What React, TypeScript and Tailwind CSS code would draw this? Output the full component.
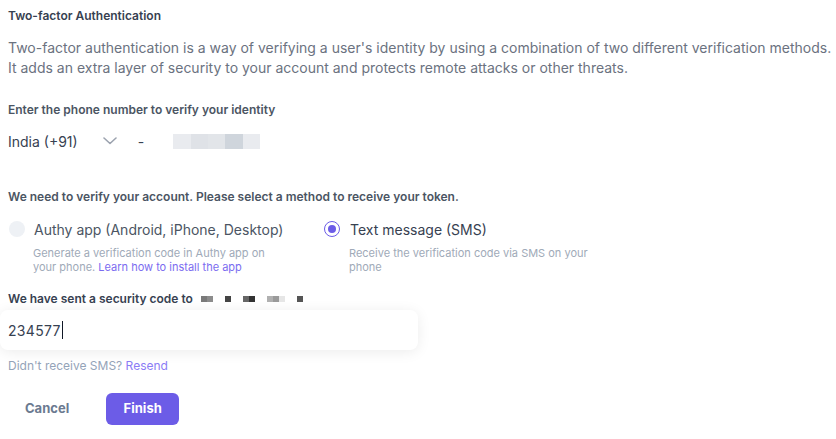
import React from "react";

const phoneBlocks = ["#e9ebef", "#dfe2e7", "#e2e5e9", "#cfd5dc", "#e9ebef"];
const codeBlocks: { c: string }[] = [
  { c: "#7a7a7a" },
  { c: "#8c8c8c" },
  { c: "#ffffff" },
  { c: "#ffffff" },
  { c: "#444444" },
  { c: "#ffffff" },
  { c: "#ffffff" },
  { c: "#666666" },
  { c: "#333333" },
  { c: "#ffffff" },
  { c: "#ffffff" },
  { c: "#b0b0b0" },
  { c: "#9a9a9a" },
  { c: "#e6e6e6" },
  { c: "#ffffff" },
  { c: "#ffffff" },
  { c: "#555555" },
];

export default function App() {
  return (
    <div
      className="w-[836px] h-[439px] bg-white overflow-hidden px-2 pt-[8px]"
      style={{ fontFamily: "Inter, 'Noto Sans', sans-serif" }}
    >
      <div className="text-[12px] leading-[16px] font-semibold text-[#374151]">
        Two-factor Authentication
      </div>
      <p className="mt-[14px] text-[14px] leading-[20px] text-[#6b7280] w-[830px]">
        Two-factor authentication is a way of verifying a user's identity by using a combination of two different verification methods. It adds an extra layer of security to your account and protects remote attacks or other threats.
      </p>

      <div className="mt-[24px] text-[12px] leading-[16px] font-semibold text-[#4b5563]">
        Enter the phone number to verify your identity
      </div>
      <div className="mt-[13px] flex items-center h-[20px]">
        <span className="text-[14px] text-[#374151]">India (+91)</span>
        <svg className="ml-[25px]" width="14" height="8" viewBox="0 0 14 8" fill="none">
          <path d="M1 1l6 5.5L13 1" stroke="#9ca3af" strokeWidth="1.6" strokeLinecap="round" strokeLinejoin="round" />
        </svg>
        <span className="ml-[21px] text-[14px] text-[#374151]">-</span>
        <div className="ml-[29px] flex h-[15px]">
          {phoneBlocks.map((c, i) => (
            <div key={i} className="w-[17.4px] h-full" style={{ background: c }} />
          ))}
        </div>
      </div>

      <div className="mt-[38px] text-[12px] leading-[16px] font-semibold text-[#4b5563]">
        We need to verify your account. Please select a method to receive your token.
      </div>

      <div className="mt-[14px] flex">
        <div className="w-[316px]">
          <div className="flex items-center h-[20px]">
            <span className="w-[16px] h-[16px] rounded-full bg-[#eef1f5] ml-[1px]" />
            <span className="ml-[9px] text-[14px] text-[#4b5563]">Authy app (Android, iPhone, Desktop)</span>
          </div>
          <div className="mt-[7px] ml-[25px] w-[250px] text-[11px] leading-[14px] text-[#a0aab8]">
            <div>Generate a verification code in Authy app on</div>
            <div>
              your phone. <span className="text-[#7b6cf0]">Learn how to install the app</span>
            </div>
          </div>
        </div>
        <div>
          <div className="flex items-center h-[20px]">
            <span className="w-[16px] h-[16px] rounded-full border-[1.5px] border-[#6c5ce7] flex items-center justify-center">
              <span className="w-[8px] h-[8px] rounded-full bg-[#6c5ce7]" />
            </span>
            <span className="ml-[10px] text-[14px] text-[#374151]">Text message (SMS)</span>
          </div>
          <div className="mt-[7px] ml-[25px] text-[11px] leading-[14px] text-[#a0aab8] w-[250px]">
            Receive the verification code via SMS on your phone
          </div>
        </div>
      </div>

      <div className="mt-[17px] flex items-center text-[12px] leading-[16px] font-semibold text-[#374151]">
        <span>We have sent a security code to</span>
        <div className="ml-[8px] flex h-[6px]">
          {codeBlocks.map((b, i) => (
            <div key={i} className="w-[6px] h-full" style={{ background: b.c }} />
          ))}
        </div>
      </div>

      <div className="-ml-2 mt-[3px] w-[418px] h-[40px] rounded-[8px] bg-white shadow-[0_2px_14px_rgba(0,0,0,0.08)] flex items-center pl-[8px]">
        <span className="text-[14px] text-[#374151] tracking-[0.3px]">234577</span>
        <span className="ml-[1px] w-[1px] h-[18px] bg-[#111827]" />
      </div>

      <div className="mt-[8px] text-[12px] leading-[16px] text-[#94a3b8]">
        Didn't receive SMS? <span className="text-[#8b7cf5]">Resend</span>
      </div>

      <div className="mt-[19px] flex items-center">
        <button className="ml-[17px] text-[13px] font-bold text-[#6b7a90]">Cancel</button>
        <button className="ml-[37px] w-[73px] h-[32px] rounded-[6px] bg-[#6c5ce7] text-white text-[13px] font-bold">
          Finish
        </button>
      </div>
    </div>
  );
}
